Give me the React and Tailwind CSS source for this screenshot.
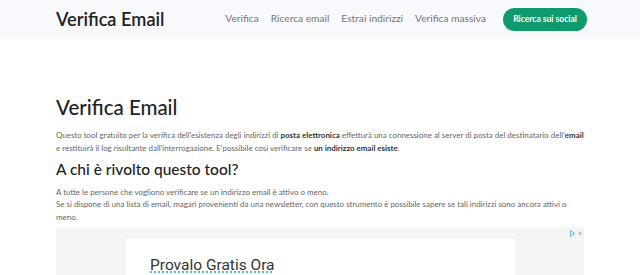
export default function App() {
  return (
    <div className="w-[640px] h-[275px] overflow-hidden bg-white" style={{ fontFamily: "Lato, 'Noto Sans', sans-serif" }}>
      <header className="h-[38px] bg-[#f8f9fc] flex items-center pl-[56px] pr-[53px]">
        <div className="text-[18.2px] font-semibold text-[#222] leading-none">Verifica Email</div>
        <nav className="ml-auto flex items-center gap-[12px] text-[10.2px] text-[#777]">
          <span>Verifica</span>
          <span>Ricerca email</span>
          <span>Estrai indirizzi</span>
          <span>Verifica massiva</span>
          <button className="ml-[5px] h-[23px] w-[84px] rounded-full bg-[#0f9a6e] text-white text-[8.5px] font-bold">Ricerca sui social</button>
        </nav>
      </header>
      <main className="px-[56px] pt-[59px] w-[640px]">
        <h1 className="text-[20.5px] font-medium text-[#222] leading-none">Verifica Email</h1>
        <p className="mt-[11px] text-[7.95px] leading-[13px] text-[#666] whitespace-nowrap">
          Questo tool gratuito per la verifica dell'esistenza degli indirizzi di <b className="text-[#333]">posta elettronica</b> effetturà una connessione al server di posta del destinatario dell'<b className="text-[#333]">email</b><br />
          e restituirà il log risultante dall'interrogazione. E'possibile così verificare se <b className="text-[#333]">un indirizzo email esiste</b>.
        </p>
        <h2 className="mt-[3px] text-[15.5px] font-medium text-[#222] leading-[22px]">A chi è rivolto questo tool?</h2>
        <p className="mt-[6px] text-[7.95px] leading-[12.5px] text-[#666] whitespace-nowrap">
          A tutte le persone che vogliono verificare se un indirizzo email è attivo o meno.<br />
          Se si dispone di una lista di email, magari provenienti da una newsletter, con questo strumento è possibile sapere se tali indirizzi sono ancora attivi o<br />
          meno.
        </p>
        <div className="relative mt-[4px] h-[60px] bg-[#f5f5f5] pt-[12px] pl-[70px] pr-[69px]">
          <div className="bg-white h-full pl-[24px] pt-[13px]">
            <span className="text-[15.5px] text-[#333] underline decoration-dotted decoration-[#2a9fd6] underline-offset-2" style={{ fontFamily: "Roboto, sans-serif" }}>Provalo Gratis Ora</span>
          </div>
          <div className="absolute right-[2px] top-[3px] flex items-center gap-[2px] text-[#41b6d6]">
            <svg width="7" height="7" viewBox="0 0 10 10"><path d="M2 1 L8 5 L2 9 Z" fill="none" stroke="#41b6d6" strokeWidth="1.3" /></svg>
            <span className="text-[7px] text-[#888] leading-none">×</span>
          </div>
        </div>
      </main>
    </div>
  );
}
